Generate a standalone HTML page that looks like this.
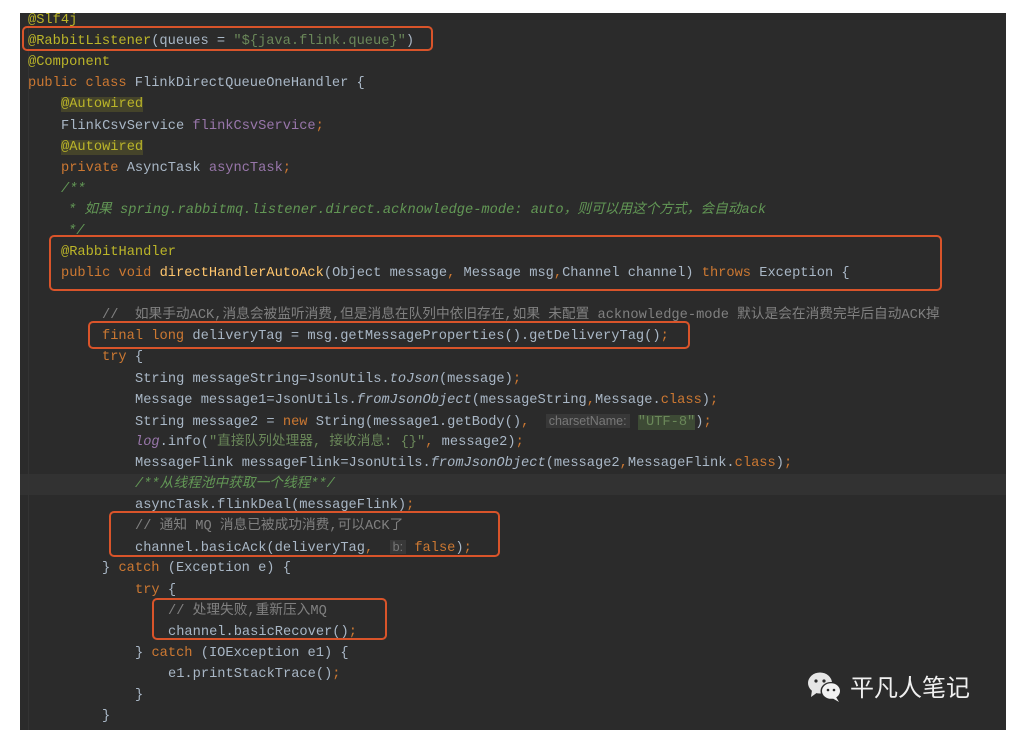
<!DOCTYPE html>
<html><head><meta charset="utf-8"><style>
body{margin:0;background:#fff;width:1022px;height:746px;overflow:hidden;position:relative;font-family:"Liberation Mono","Noto Sans CJK SC",monospace}
#ed{position:absolute;left:20px;top:13px;width:986px;height:717px;background:#2b2b2b;overflow:hidden}
#in{position:absolute;left:0;top:2px;width:986px;height:717px}
.l{position:absolute;white-space:pre;font-size:13.7px;line-height:21px;color:#a9b7c6}
.a{color:#bbb529}.k{color:#cc7832}.f{color:#9876aa}.s{color:#6a8759}.c{color:#808080}.d{color:#629755;font-style:italic}.m{color:#ffc66d}.i{font-style:italic}
.hl{background:#45442a}.h{color:#787878;background:#383838;font-family:"Liberation Sans",sans-serif;font-size:12.5px;padding:0 3px}
.bx{position:absolute;border:2.5px solid #d9542a;border-radius:5px}
.cur{position:absolute;left:0;right:0;top:459px;height:21px;background:#323232}
.guide{position:absolute;width:1px;background:#373737}
</style></head><body>
<div id="ed"><div id="in">
<div class="cur"></div>
<div class="guide" style="left:8px;top:0;height:717px;background:#333"></div>
<div class="l a" style="left:8px;top:-5px">@Slf4j</div>
<div class="l" style="left:8px;top:16px"><span class="a">@RabbitListener</span>(queues = <span class="s">"${java.flink.queue}"</span>)</div>
<div class="l a" style="left:8px;top:37px">@Component</div>
<div class="l" style="left:8px;top:58px"><span class="k">public class </span>FlinkDirectQueueOneHandler {</div>
<div class="l" style="left:41px;top:79px"><span class="a hl">@Autowired</span></div>
<div class="l" style="left:41px;top:101px">FlinkCsvService <span class="f">flinkCsvService</span><span class="k">;</span></div>
<div class="l" style="left:41px;top:122px"><span class="a hl">@Autowired</span></div>
<div class="l" style="left:41px;top:143px"><span class="k">private </span>AsyncTask <span class="f">asyncTask</span><span class="k">;</span></div>
<div class="l d" style="left:41px;top:164px">/**</div>
<div class="l d" style="left:48px;top:185px">* 如果 spring.rabbitmq.listener.direct.acknowledge-mode: auto，则可以用这个方式，会自动ack</div>
<div class="l d" style="left:48px;top:206px">*/</div>
<div class="l a" style="left:41px;top:227px">@RabbitHandler</div>
<div class="l" style="left:41px;top:248px"><span class="k">public void </span><span class="m">directHandlerAutoAck</span>(Object message<span class="k">, </span>Message msg<span class="k">,</span>Channel channel) <span class="k">throws </span>Exception {</div>
<div class="l c" style="left:82px;top:290px">//  如果手动ACK,消息会被监听消费,但是消息在队列中依旧存在,如果 未配置 acknowledge-mode 默认是会在消费完毕后自动ACK掉</div>
<div class="l" style="left:82px;top:311px"><span class="k">final long </span>deliveryTag = msg.getMessageProperties().getDeliveryTag()<span class="k">;</span></div>
<div class="l" style="left:82px;top:332px"><span class="k">try </span>{</div>
<div class="l" style="left:115px;top:354px">String messageString=JsonUtils.<span class="i">toJson</span>(message)<span class="k">;</span></div>
<div class="l" style="left:115px;top:375px">Message message1=JsonUtils.<span class="i">fromJsonObject</span>(messageString<span class="k">,</span>Message.<span class="k">class</span>)<span class="k">;</span></div>
<div class="l" style="left:115px;top:396px">String message2 = <span class="k">new </span>String(message1.getBody()<span class="k">, </span> <span class="h">charsetName:</span> <span class="s" style="background:#3d4a35">"UTF-8"</span>)<span class="k">;</span></div>
<div class="l" style="left:115px;top:417px"><span class="f i">log</span>.info(<span class="s">"直接队列处理器, 接收消息: {}"</span><span class="k">, </span>message2)<span class="k">;</span></div>
<div class="l" style="left:115px;top:438px">MessageFlink messageFlink=JsonUtils.<span class="i">fromJsonObject</span>(message2<span class="k">,</span>MessageFlink.<span class="k">class</span>)<span class="k">;</span></div>
<div class="l d" style="left:115px;top:459px">/**从线程池中获取一个线程**/</div>
<div class="l" style="left:115px;top:480px">asyncTask.flinkDeal(messageFlink)<span class="k">;</span></div>
<div class="l c" style="left:115px;top:501px">// 通知 MQ 消息已被成功消费,可以ACK了</div>
<div class="l" style="left:115px;top:522px">channel.basicAck(deliveryTag<span class="k">, </span> <span class="h">b:</span> <span class="k">false</span>)<span class="k">;</span></div>
<div class="l" style="left:82px;top:543px">} <span class="k">catch </span>(Exception e) {</div>
<div class="l" style="left:115px;top:565px"><span class="k">try </span>{</div>
<div class="l c" style="left:148px;top:586px">// 处理失败,重新压入MQ</div>
<div class="l" style="left:148px;top:607px">channel.basicRecover()<span class="k">;</span></div>
<div class="l" style="left:115px;top:628px">} <span class="k">catch </span>(IOException e1) {</div>
<div class="l" style="left:148px;top:649px">e1.printStackTrace()<span class="k">;</span></div>
<div class="l" style="left:115px;top:670px">}</div>
<div class="l" style="left:82px;top:691px">}</div>
</div>
<svg style="position:absolute;left:786px;top:657px" width="40" height="34" viewBox="0 0 40 34">
<ellipse cx="14" cy="13" rx="12" ry="10.5" fill="#e6e6e6"/><path d="M6 20 L5 27 L12 22 Z" fill="#e6e6e6"/>
<circle cx="10" cy="11" r="1.6" fill="#2b2b2b"/><circle cx="18" cy="11" r="1.6" fill="#2b2b2b"/>
<ellipse cx="25" cy="21" rx="10.5" ry="9" fill="#2b2b2b"/>
<ellipse cx="25" cy="21" rx="9" ry="7.8" fill="#f2f2f2"/><path d="M30 27 L33 32 L26 28 Z" fill="#f2f2f2"/>
<circle cx="22" cy="20" r="1.3" fill="#2b2b2b"/><circle cx="28" cy="20" r="1.3" fill="#2b2b2b"/>
</svg>
<div style="position:absolute;left:830px;top:657px;color:#f0f0f0;font-family:'Noto Sans CJK SC',sans-serif;font-size:24px;line-height:32px">平凡人笔记</div>
</div>
<div class="bx" style="left:22px;top:26px;width:407px;height:21px"></div>
<div class="bx" style="left:49px;top:235px;width:889px;height:52px"></div>
<div class="bx" style="left:88px;top:321px;width:598px;height:24px"></div>
<div class="bx" style="left:109px;top:511px;width:387px;height:42px"></div>
<div class="bx" style="left:152px;top:598px;width:231px;height:38px"></div>
</body></html>
